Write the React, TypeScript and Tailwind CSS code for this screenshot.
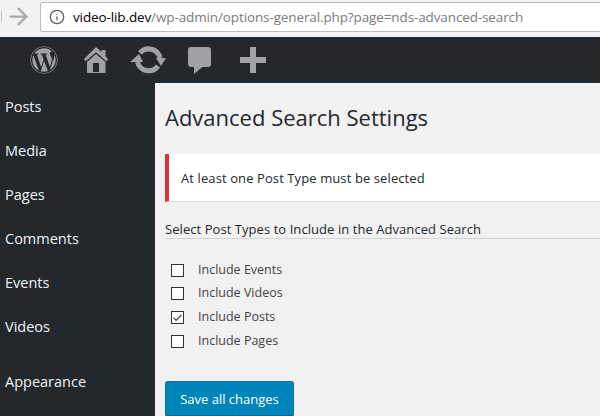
import { FaWordpress } from 'react-icons/fa'
import { ArrowRight, Info, Check } from 'lucide-react'

const font = { fontFamily: '"Open Sans", "Noto Sans", sans-serif' }

const menuItems = [
  { label: 'Posts', cls: 'h-[44px]' },
  { label: 'Media', cls: 'h-[44px]' },
  { label: 'Pages', cls: 'h-[44px]' },
  { label: 'Comments', cls: 'h-[44px]' },
  { label: 'Events', cls: 'h-[44px]' },
  { label: 'Videos', cls: 'h-[44px]' },
  { label: 'Appearance', cls: 'h-[44px] mt-[11px]' },
]

const postTypes = [
  { label: 'Include Events', checked: false, cls: 'h-[23px]' },
  { label: 'Include Videos', checked: false, cls: 'h-[23px]' },
  { label: 'Include Posts', checked: true, cls: 'h-[25px]' },
  { label: 'Include Pages', checked: false, cls: 'h-[23px]' },
]

export default function App() {
  return (
    <div className="w-[600px] h-[416px] overflow-hidden flex flex-col bg-[#f1f1f1]" style={font}>
      {/* Browser bar */}
      <div className="h-[37px] shrink-0 flex items-start bg-[#f2f2f2]">
        <div className="w-[2px] h-[12px] shrink-0 mt-[11px] border-r border-[#c4c4c4] rounded-r-full" />
        <ArrowRight className="w-[27px] h-[27px] shrink-0 ml-[3px] mt-[3px] text-[#a9a9a9]" strokeWidth={2} />
        <div className="ml-[8px] mt-[2px] w-[570px] h-[30px] shrink-0 bg-white border border-[#bdbdbd] rounded-[2px] flex items-center">
          <Info className="w-[16px] h-[16px] shrink-0 ml-[8px] text-[#5f5f5f]" strokeWidth={2} />
          <span className="ml-[8px] text-[13.5px] tracking-[-0.12px] whitespace-nowrap text-[#7b7b7b]">
            <span className="text-black">video-lib.dev</span>/wp-admin/options-general.php?page=nds-advanced-search
          </span>
        </div>
      </div>

      {/* Admin bar */}
      <div className="h-[46px] shrink-0 bg-[#23282d] flex items-center text-[#9ea3a8]">
        <FaWordpress className="w-[28px] h-[28px] shrink-0 ml-[30px]" />
        <svg viewBox="0 0 24 26" className="w-[24px] h-[26px] shrink-0 ml-[26px]" fill="currentColor">
          <path d="M12 0 L17.5 5 V3 H21.5 V9 L24 12 L22.5 14.5 L12 5.2 L1.5 14.5 L0 12 Z" />
          <path fillRule="evenodd" d="M3 15 L12 7 L21.5 15 V26 H3 Z M9 16 H15 V25 H9 Z" />
        </svg>
        <svg viewBox="0 0 36 28" className="w-[36px] h-[28px] shrink-0 ml-[22px]" fill="none">
          <path d="M10 7 A11.5 11.5 0 0 1 30 12" stroke="currentColor" strokeWidth="5" />
          <path d="M28 20 A11.5 11.5 0 0 1 7.5 16" stroke="currentColor" strokeWidth="5" />
          <path d="M0 16 L9 8 L13 16 Z" fill="currentColor" />
          <path d="M26 12 H36 L31 20 Z" fill="currentColor" />
        </svg>
        <svg viewBox="0 0 23 27" className="w-[23px] h-[27px] shrink-0 ml-[22px]" fill="currentColor">
          <path d="M3 0 H20 Q23 0 23 3 V17 Q23 20 20 20 H14.5 L6 27 V20 H3 Q0 20 0 17 V3 Q0 0 3 0 Z" />
        </svg>
        <svg viewBox="0 0 26 26" className="w-[26px] h-[26px] shrink-0 ml-[29px]" fill="currentColor">
          <path d="M10 0 H16 V10 H26 V16 H16 V26 H10 V16 H0 V10 H10 Z" />
        </svg>
      </div>

      <div className="flex flex-1 min-h-0">
        {/* Sidebar */}
        <div className="w-[155px] shrink-0 bg-[#23282d] pt-[2px] pl-[5px]">
          {menuItems.map((item) => (
            <div key={item.label} className={`${item.cls} flex items-center text-[14.5px] text-[#eef2f5]`}>
              {item.label}
            </div>
          ))}
        </div>

        {/* Content */}
        <div className="flex-1 min-w-0 pl-[10px]">
          <h1 className="mt-[18px] h-[32px] leading-[32px] text-[22px] text-[#23282d]">Advanced Search Settings</h1>

          <div className="mt-[21px] h-[48px] bg-white border-l-4 border-[#dc3232] border-b border-b-[#dcdcdc] pl-[12px] flex items-center">
            <span className="mt-[2px] text-[13px] font-medium tracking-[0.1px] text-[#23282d]">At least one Post Type must be selected</span>
          </div>

          <div className="mt-[18px] h-[19px] border-b border-[#d4d4d4] text-[13px] font-medium tracking-[0.06px] leading-[18px] text-[#23282d] whitespace-nowrap">
            Select Post Types to Include in the Advanced Search
          </div>

          <div className="mt-[20px] pl-[6px]">
            {postTypes.map((type) => (
              <label key={type.label} className={`${type.cls} flex items-center`}>
                <span className="w-[13px] h-[13px] border border-[#333] bg-white flex items-center justify-center">
                  {type.checked && <Check className="w-[12px] h-[12px] text-[#444]" strokeWidth={2.5} />}
                </span>
                <span className="ml-[14px] text-[12.5px] text-[#444]">{type.label}</span>
              </label>
            ))}
          </div>

          <button className="mt-[28px] w-[129px] h-[36px] pt-[2px] bg-[#0085ba] border border-[#0073aa] border-b-2 border-b-[#006799] rounded-[3px] text-[13px] text-white">
            Save all changes
          </button>
        </div>
      </div>
    </div>
  )
}
